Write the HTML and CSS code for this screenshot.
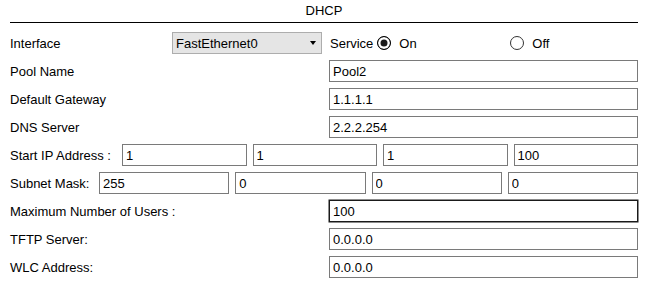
FILE: index.html
```html
<!DOCTYPE html>
<html lang="en">
  <head>
    <meta charset="UTF-8" />
    <title>DHCP</title>
    <link rel="stylesheet" href="styles.css">
  </head>
  <body>
    <div class="panel">
      <div class="title">DHCP</div>
      <form class="form">
        <div class="row">
          <span class="label label-iface">Interface</span>
          <span class="select-wrap">
            <select class="select">
              <option>FastEthernet0</option>
            </select>
          </span>
          <span class="service">Service</span>
          <label class="choice choice-on">
            <input type="radio" name="service" class="radio" checked /> On
          </label>
          <label class="choice">
            <input type="radio" name="service" class="radio" /> Off
          </label>
        </div>
        <div class="row">
          <span class="label label-wide">Pool Name</span>
          <input class="field" type="text" value="Pool2" />
        </div>
        <div class="row">
          <span class="label label-wide">Default Gateway</span>
          <input class="field" type="text" value="1.1.1.1" />
        </div>
        <div class="row">
          <span class="label label-wide">DNS Server</span>
          <input class="field" type="text" value="2.2.2.254" />
        </div>
        <div class="row">
          <span class="label label-start">Start IP Address :</span>
          <div class="octets">
            <input class="field" type="text" value="1" />
            <input class="field" type="text" value="1" />
            <input class="field" type="text" value="1" />
            <input class="field" type="text" value="100" />
          </div>
        </div>
        <div class="row">
          <span class="label label-mask">Subnet Mask:</span>
          <div class="octets">
            <input class="field" type="text" value="255" />
            <input class="field" type="text" value="0" />
            <input class="field" type="text" value="0" />
            <input class="field" type="text" value="0" />
          </div>
        </div>
        <div class="row">
          <span class="label label-wide">Maximum Number of Users :</span>
          <input class="field field-active" type="text" value="100" />
        </div>
        <div class="row">
          <span class="label label-wide">TFTP Server:</span>
          <input class="field" type="text" value="0.0.0.0" />
        </div>
        <div class="row">
          <span class="label label-wide">WLC Address:</span>
          <input class="field" type="text" value="0.0.0.0" />
        </div>
      </form>
    </div>
  </body>
</html>
```

FILE: styles.css
```css
body {
  margin: 0;
  background: #fff;
  font-family: "Liberation Sans", Arial, sans-serif;
  font-size: 13px;
  color: #000;
}
.panel {
  padding: 0 8px 0 10px;
}
.title {
  height: 22px;
  line-height: 22px;
  text-align: center;
  border-bottom: 1px solid #000;
}
.form {
  margin-top: 6px;
}
.row {
  display: flex;
  align-items: center;
  height: 28px;
}
.label {
  flex: none;
}
.label-iface {
  width: 162px;
}
.label-wide {
  width: 319px;
}
.label-start {
  width: 112px;
}
.label-mask {
  width: 89px;
}
.field {
  flex: 1 1 0;
  width: 0;
  min-width: 0;
  height: 22px;
  box-sizing: border-box;
  margin: 0;
  padding: 0 3px;
  border: 1px solid #7a7a7a;
  border-radius: 0;
  background: #fff;
  font-family: inherit;
  font-size: 13px;
  color: #000;
  outline: none;
}
.field-active {
  border-color: #1a1a1a;
  box-shadow: 0 0 0 0.5px #1a1a1a;
}
.octets {
  flex: 1 1 0;
  min-width: 0;
  display: flex;
  gap: 6px;
}
.select-wrap {
  position: relative;
  width: 150px;
  height: 22px;
}
.select {
  appearance: none;
  width: 100%;
  height: 100%;
  margin: 0;
  padding: 0 3px;
  border: 1px solid #adadad;
  border-radius: 0;
  background: #e5e5e5;
  font-family: inherit;
  font-size: 13px;
  color: #000;
}
/* стрелка списка */
.select-wrap::after {
  content: "";
  position: absolute;
  top: 9px;
  right: 6px;
  border-left: 3.5px solid transparent;
  border-right: 3.5px solid transparent;
  border-top: 4px solid #000;
  pointer-events: none;
}
.service {
  margin-left: 8px;
}
.choice {
  display: flex;
  align-items: center;
  gap: 8px;
}
.choice-on {
  width: 133px;
  margin-left: 4px;
}
.radio {
  appearance: none;
  width: 14px;
  height: 14px;
  margin: 0;
  border: 1px solid #333;
  border-radius: 50%;
  background: #fff;
}
.radio:checked {
  border-color: #000;
  background: #1a1a1a;
  box-shadow: inset 0 0 0 2.5px #fff;
}
```
